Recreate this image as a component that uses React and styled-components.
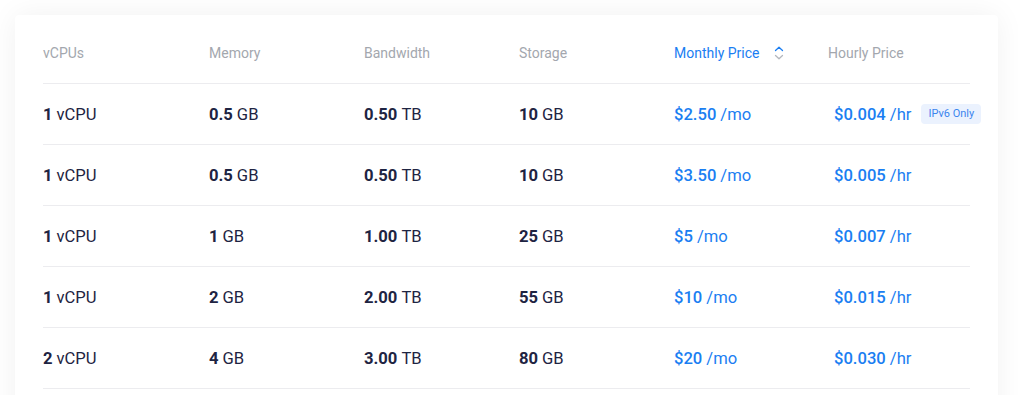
import React from "react"
import styled, { createGlobalStyle } from "styled-components"

const Global = createGlobalStyle`
  html, body {
    margin: 0;
    background: #ffffff;
  }
  body {
    font-family: Roboto, "Noto Sans", "Liberation Sans", sans-serif;
    -webkit-font-smoothing: antialiased;
  }
`

const S = {
  Page: styled.div`
    padding: 15px 20px 0 15px;
    height: 380px;
    overflow: hidden;
  `,
  Card: styled.section`
    background: #ffffff;
    border-radius: 4px;
    box-shadow: 0 0 30px rgba(0, 0, 0, 0.06);
    padding: 0 28px 40px 28px;
  `,
  Row: styled.div`
    display: flex;
    align-items: center;
    height: ${p => (p.$head ? "69px" : "60px")};
    border-bottom: 1px solid #ececef;
    ${p => p.$head && "align-items: flex-start; box-sizing: border-box; padding-top: 30px;"}
  `,
  HeadCell: styled.div`
    width: ${p => p.$w}px;
    flex: none;
    display: flex;
    align-items: center;
    font-size: 14px;
    line-height: 16px;
    margin-left: ${p => p.$shift || 0}px;
    color: ${p => (p.$active ? "#1a7ef2" : "#a3a7ae")};
  `,
  Cell: styled.div`
    width: ${p => p.$w}px;
    flex: none;
    display: flex;
    align-items: center;
    white-space: nowrap;
    font-size: 16.6px;
    color: ${p => (p.$price ? "#1a7ef2" : "#1e2442")};
  `,
  Strong: styled.span`
    font-weight: ${p => (p.$price ? 500 : 700)};
    margin-right: 4px;
  `,
  Sort: styled.svg`
    margin-left: 15px;
    margin-top: -1px;
  `,
  Badge: styled.span`
    margin-left: 10px;
    padding: 0 7px;
    height: 20px;
    line-height: 20px;
    border-radius: 4px;
    background: #ebf2fe;
    color: #3b85ee;
    font-size: 11px;
  `,
}

const widths = [166, 155, 155, 155, 160, 136]

const plans = [
  ["1", "0.5", "0.50", "10", "2.50", "0.004", true],
  ["1", "0.5", "0.50", "10", "3.50", "0.005"],
  ["1", "1", "1.00", "25", "5", "0.007"],
  ["1", "2", "2.00", "55", "10", "0.015"],
  ["2", "4", "3.00", "80", "20", "0.030"],
]

const SortIcon = () => (
  <S.Sort width="10" height="14" viewBox="0 0 10 14" fill="none" strokeWidth="1.3" strokeLinecap="round" strokeLinejoin="round">
    <path d="M1.5 4.5 L5 1.2 L8.5 4.5" stroke="#1a7ef2" />
    <path d="M1.5 9.5 L5 12.8 L8.5 9.5" stroke="#b4b7bd" />
  </S.Sort>
)

export default function App() {
  return (
    <>
      <Global />
      <S.Page>
        <S.Card>
          <S.Row $head>
            <S.HeadCell $w={widths[0]}>vCPUs</S.HeadCell>
            <S.HeadCell $w={widths[1]}>Memory</S.HeadCell>
            <S.HeadCell $w={widths[2]}>Bandwidth</S.HeadCell>
            <S.HeadCell $w={widths[3]}>Storage</S.HeadCell>
            <S.HeadCell $w={widths[4]} $active>Monthly Price<SortIcon /></S.HeadCell>
            <S.HeadCell $w={widths[5]} $shift={-6}>Hourly Price</S.HeadCell>
          </S.Row>
          {plans.map(([cpu, mem, bw, st, mo, hr, v6], i) => (
            <S.Row key={i}>
              <S.Cell $w={widths[0]}><S.Strong>{cpu}</S.Strong>vCPU</S.Cell>
              <S.Cell $w={widths[1]}><S.Strong>{mem}</S.Strong>GB</S.Cell>
              <S.Cell $w={widths[2]}><S.Strong>{bw}</S.Strong>TB</S.Cell>
              <S.Cell $w={widths[3]}><S.Strong>{st}</S.Strong>GB</S.Cell>
              <S.Cell $w={widths[4]} $price><S.Strong $price>${mo}</S.Strong>/mo</S.Cell>
              <S.Cell $w={widths[5]} $price>
                <S.Strong $price>${hr}</S.Strong>/hr
                {v6 && <S.Badge>IPv6 Only</S.Badge>}
              </S.Cell>
            </S.Row>
          ))}
        </S.Card>
      </S.Page>
    </>
  )
}
